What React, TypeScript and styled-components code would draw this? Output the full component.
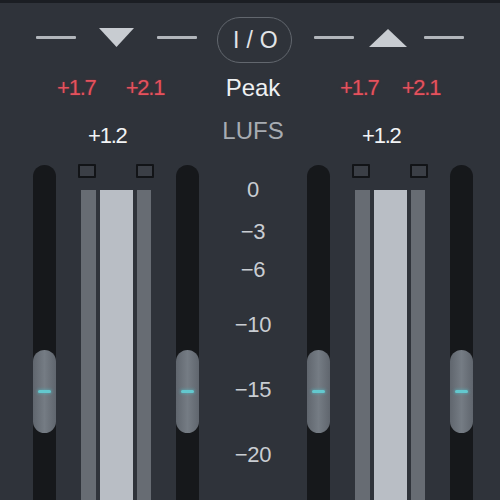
import React from 'react';
import styled, { createGlobalStyle } from 'styled-components';

const Global = createGlobalStyle`
  html, body { margin: 0; padding: 0; background: #2f333a; }
  body { width: 500px; height: 500px; overflow: hidden; font-family: "Liberation Sans", Arial, sans-serif; }
`;

const Panel = styled.div`
  width: 500px;
  height: 500px;
  overflow: hidden;
  background: #2f333a;
  display: flex;
  flex-direction: column;
`;

const TopEdge = styled.div`
  flex: none;
  height: 3px;
  background: #1b1e23;
`;

const Header = styled.div`
  flex: none;
  display: flex;
  align-items: center;
  height: 46px;
  padding: 14px 0 0 36px;
`;

const Dash = styled.div<{ $ml?: number }>`
  width: 40px;
  height: 3px;
  margin-left: ${(p) => p.$ml ?? 0}px;
  margin-bottom: 5px;
  background: #b2b6bb;
  border-radius: 1px;
`;

const Tri = styled.svg<{ $ml?: number }>`
  display: block;
  margin-left: ${(p) => p.$ml ?? 0}px;
  margin-bottom: 5px;
  fill: #c8ccd1;
`;

const Pill = styled.div<{ $ml?: number }>`
  box-sizing: border-box;
  width: 75px;
  height: 46px;
  margin-left: ${(p) => p.$ml ?? 0}px;
  border: 1.5px solid #62676e;
  border-radius: 23px;
  display: flex;
  align-items: center;
  justify-content: center;
  padding-left: 2px;
  color: #e2e4e7;
  font-size: 23px;
  letter-spacing: 0.3px;
  white-space: pre;
`;

const Body = styled.div`
  flex: 1;
  display: flex;
  padding-left: 33px;
  min-height: 0;
`;

const Channel = styled.div`
  width: 166px;
  display: flex;
  flex-direction: column;
`;

const ValueRow = styled.div<{ $pl: number; $gap: number }>`
  display: flex;
  height: 26px;
  margin-top: 12px;
  padding-left: ${(p) => p.$pl}px;
  gap: ${(p) => p.$gap}px;
  align-items: center;
`;

const RedValue = styled.span`
  color: #e4525d;
  font-size: 22px;
  line-height: 26px;
  letter-spacing: -1.2px;
  text-shadow: 0 0 2px rgba(200, 40, 60, 0.5);
`;

const GainRow = styled.div`
  height: 26px;
  margin-top: 22px;
  padding-left: 55px;
  color: #f2f3f5;
  font-size: 22px;
  line-height: 26px;
  letter-spacing: -1.2px;
`;

const MeterArea = styled.div`
  flex: 1;
  margin-top: 15px;
  display: grid;
  grid-template-columns: 23px 1fr 23px;
`;

const Track = styled.div`
  position: relative;
  margin-top: 1px;
  background: #16181b;
  border-radius: 12px 12px 0 0;
`;

const Handle = styled.div`
  position: absolute;
  top: 185px;
  left: 0;
  right: 0;
  height: 83px;
  border-radius: 12px;
  background: linear-gradient(90deg, #60666e, #757c84 50%, #60666e);
  display: flex;
  align-items: center;
  justify-content: center;
`;

const HandleMark = styled.div`
  width: 13px;
  height: 3px;
  border-radius: 2px;
  background: #63c8ce;
  box-shadow: 0 0 3px 1px rgba(80, 190, 200, 0.45);
`;

const MeterColumn = styled.div`
  padding: 0 22px;
  display: flex;
  flex-direction: column;
`;

const PeakBoxes = styled.div`
  display: flex;
  justify-content: space-between;
  height: 14px;
`;

const PeakBox = styled.div`
  box-sizing: border-box;
  width: 18px;
  height: 14px;
  border: 2px solid #121417;
  background: #3b3f46;
  border-radius: 1px;
`;

const Bars = styled.div`
  flex: 1;
  margin-top: 12px;
  display: flex;
  gap: 4px;
  padding-left: 3px;
`;

const Bar = styled.div<{ $w: number; $light?: boolean }>`
  width: ${(p) => p.$w}px;
  background: ${(p) => (p.$light ? '#b9bec5' : '#676c73')};
`;

const Center = styled.div`
  width: 108px;
  display: flex;
  flex-direction: column;
  align-items: center;
`;

const PeakLabel = styled.div`
  margin-top: 11px;
  height: 28px;
  line-height: 28px;
  font-size: 24px;
  color: #eef0f2;
`;

const LufsLabel = styled.div`
  margin-top: 15px;
  height: 28px;
  line-height: 28px;
  font-size: 24px;
  color: #a7acb2;
`;

const Scale = styled.div`
  position: relative;
  align-self: stretch;
  flex: 1;
`;

const ScaleLabel = styled.div`
  position: absolute;
  left: 0;
  right: 0;
  text-align: center;
  font-size: 22px;
  line-height: 26px;
  color: #c9cdd2;
  letter-spacing: -0.3px;
`;

const scale = [
  { label: '0', y: 190 },
  { label: '\u22123', y: 232 },
  { label: '\u22126', y: 270 },
  { label: '\u221210', y: 325 },
  { label: '\u221215', y: 390 },
  { label: '\u221220', y: 455 },
];
const SCALE_TOP = 145;

const Fader = () => (
  <Track>
    <Handle>
      <HandleMark />
    </Handle>
  </Track>
);

const Meter = () => (
  <MeterColumn>
    <PeakBoxes>
      <PeakBox />
      <PeakBox />
    </PeakBoxes>
    <Bars>
      <Bar $w={15} />
      <Bar $w={33} $light />
      <Bar $w={14} />
    </Bars>
  </MeterColumn>
);

const ChannelStrip = ({ pl, gap }: { pl: number; gap: number }) => (
  <Channel>
    <ValueRow $pl={pl} $gap={gap}>
      <RedValue>+1.7</RedValue>
      <RedValue>+2.1</RedValue>
    </ValueRow>
    <GainRow>+1.2</GainRow>
    <MeterArea>
      <Fader />
      <Meter />
      <Fader />
    </MeterArea>
  </Channel>
);

export default function App() {
  return (
    <>
      <Global />
      <Panel>
        <TopEdge />
        <Header>
          <Dash />
          <Tri $ml={23} width={35} height={19} viewBox="0 0 35 19">
            <polygon points="0,0 35,0 17.5,19" />
          </Tri>
          <Dash $ml={23} />
          <Pill $ml={20}>I / O</Pill>
          <Dash $ml={22} />
          <Tri $ml={15} width={38} height={18} viewBox="0 0 38 18">
            <polygon points="0,18 38,18 19,0" />
          </Tri>
          <Dash $ml={17} />
        </Header>
        <Body>
          <ChannelStrip pl={24} gap={30} />
          <Center>
            <PeakLabel>Peak</PeakLabel>
            <LufsLabel>LUFS</LufsLabel>
            <Scale>
              {scale.map((s) => (
                <ScaleLabel key={s.label} style={{ top: s.y - SCALE_TOP - 13 }}>
                  {s.label}
                </ScaleLabel>
              ))}
            </Scale>
          </Center>
          <ChannelStrip pl={33} gap={23} />
        </Body>
      </Panel>
    </>
  );
}
